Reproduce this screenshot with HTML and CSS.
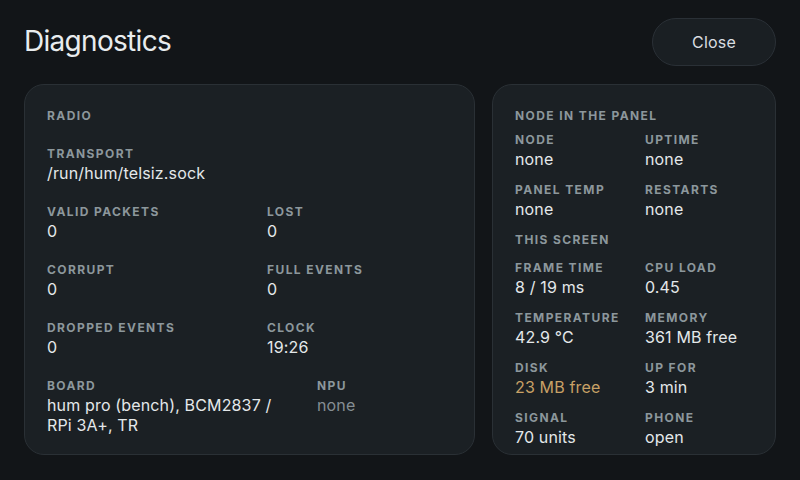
FILE: index.html
```html
<!DOCTYPE html>
<html lang="en">
<head>
<meta charset="utf-8">
<title>Diagnostics</title>
<link rel="stylesheet" href="styles.css">
</head>
<body>
<div class="page">
  <header class="header">
    <h1 class="title">Diagnostics</h1>
    <button class="close">Close</button>
  </header>
  <main class="cards">
    <section class="card card-radio">
      <div class="section">RADIO</div>
      <div class="field">
        <div class="label">TRANSPORT</div>
        <div class="value">/run/hum/telsiz.sock</div>
      </div>
      <div class="row">
        <div class="field"><div class="label">VALID PACKETS</div><div class="value">0</div></div>
        <div class="field"><div class="label">LOST</div><div class="value">0</div></div>
      </div>
      <div class="row">
        <div class="field"><div class="label">CORRUPT</div><div class="value">0</div></div>
        <div class="field"><div class="label">FULL EVENTS</div><div class="value">0</div></div>
      </div>
      <div class="row">
        <div class="field"><div class="label">DROPPED EVENTS</div><div class="value">0</div></div>
        <div class="field"><div class="label">CLOCK</div><div class="value">19:26</div></div>
      </div>
      <div class="row row-board">
        <div class="field"><div class="label">BOARD</div><div class="value">hum pro (bench), BCM2837 /<br>RPi 3A+, TR</div></div>
        <div class="field"><div class="label">NPU</div><div class="value muted">none</div></div>
      </div>
    </section>
    <section class="card card-node">
      <div class="section sec-first">NODE IN THE PANEL</div>
      <div class="row">
        <div class="field"><div class="label">NODE</div><div class="value">none</div></div>
        <div class="field"><div class="label">UPTIME</div><div class="value">none</div></div>
      </div>
      <div class="row">
        <div class="field"><div class="label">PANEL TEMP</div><div class="value">none</div></div>
        <div class="field"><div class="label">RESTARTS</div><div class="value">none</div></div>
      </div>
      <div class="section sec-second">THIS SCREEN</div>
      <div class="row">
        <div class="field"><div class="label">FRAME TIME</div><div class="value">8 / 19 ms</div></div>
        <div class="field"><div class="label">CPU LOAD</div><div class="value">0.45</div></div>
      </div>
      <div class="row">
        <div class="field"><div class="label">TEMPERATURE</div><div class="value">42.9 °C</div></div>
        <div class="field"><div class="label">MEMORY</div><div class="value">361 MB free</div></div>
      </div>
      <div class="row">
        <div class="field"><div class="label">DISK</div><div class="value warn">23 MB free</div></div>
        <div class="field"><div class="label">UP FOR</div><div class="value">3 min</div></div>
      </div>
      <div class="row">
        <div class="field"><div class="label">SIGNAL</div><div class="value">70 units</div></div>
        <div class="field"><div class="label">PHONE</div><div class="value">open</div></div>
      </div>
    </section>
  </main>
</div>
</body>
</html>
```

FILE: styles.css
```css
* { box-sizing: border-box; }

html, body {
  margin: 0;
  height: 100%;
}

body {
  background: #121518;
  color: #e4e8ea;
  font-family: "Inter", "Noto Sans", "DejaVu Sans", sans-serif;
}

.page {
  width: 800px;
  height: 480px;
  padding: 18px 24px 0 24px;
  display: flex;
  flex-direction: column;
}

.header {
  display: flex;
  justify-content: space-between;
  align-items: center;
  height: 48px;
}

.title {
  margin: 0 0 2px 0;
  font-size: 28px;
  font-weight: 400;
  letter-spacing: -0.7px;
  color: #e8ecee;
}

.close {
  width: 124px;
  height: 48px;
  border-radius: 24px;
  border: 1px solid #2a3036;
  background: #1a1f23;
  color: #d9dde0;
  font-family: inherit;
  font-size: 16px;
  letter-spacing: 0.2px;
  padding: 0;
}

.cards {
  margin-top: 18px;
  display: flex;
  gap: 17px;
  height: 371px;
}

.card {
  background: #1b2024;
  border: 1px solid #2a3035;
  border-radius: 20px;
  padding: 20px 22px;
  display: flex;
  flex-direction: column;
}

.card-radio {
  width: 451px;
  gap: 18px;
}

.card-node {
  flex: 1;
  gap: 10px;
}

.section, .label {
  font-size: 12px;
  line-height: 18px;
  padding-top: 2px;
  font-weight: 700;
  letter-spacing: 1.4px;
  color: #8c979c;
}

.sec-first { margin-bottom: -6px; }
.sec-second { margin-bottom: -2px; }

.value {
  font-size: 16px;
  line-height: 20px;
  letter-spacing: 0.15px;
  color: #e4e8ea;
}

.value.muted { color: #858e93; }
.value.warn { color: #c8a166; }

.row {
  display: grid;
  grid-template-columns: 220px 1fr;
}

.row-board {
  grid-template-columns: 270px 1fr;
}

.card-node .row {
  grid-template-columns: 130px 1fr;
}
```
